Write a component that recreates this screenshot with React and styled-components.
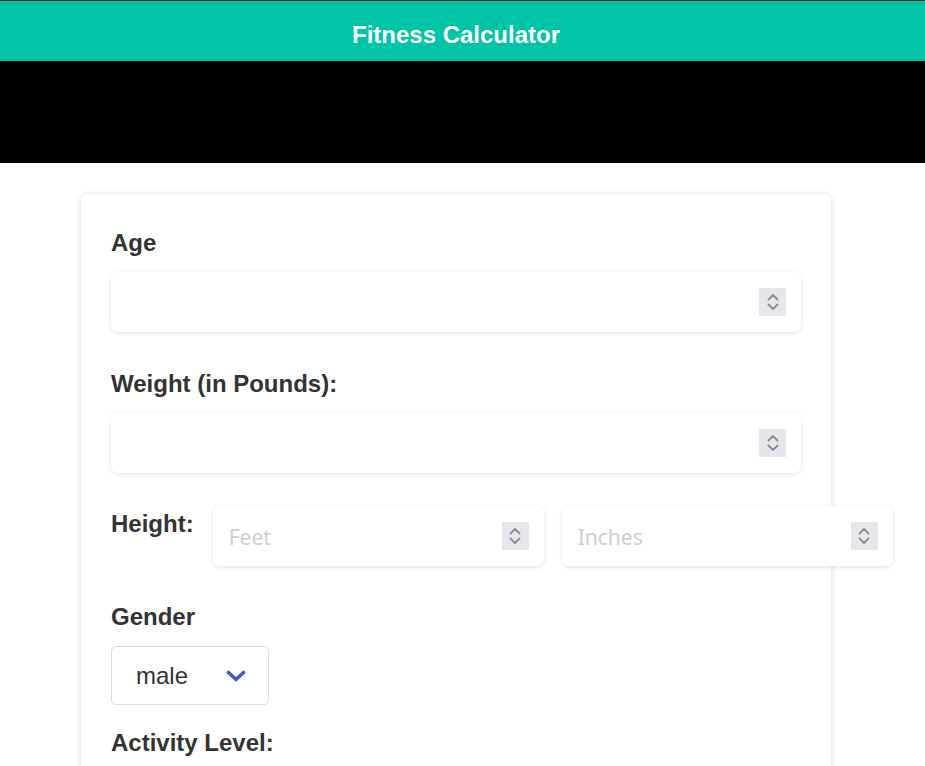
import styled, { createGlobalStyle } from "styled-components";

const GlobalStyle = createGlobalStyle`
  html, body {
    margin: 0;
    padding: 0;
    background: #ffffff;
    overflow: hidden;
  }
  body {
    font-family: "Liberation Sans", Arial, sans-serif;
  }
`;

const Page = styled.div`
  min-height: 100vh;
`;

const Header = styled.header`
  height: 60px;
  border-top: 1px solid #0d2b27;
  background: #00c4a7;
  display: flex;
  align-items: center;
  justify-content: center;
  padding-right: 13px;
`;

const Title = styled.h1`
  margin: 8px 0 0;
  color: #ffffff;
  font-size: 24px;
  font-weight: 700;
  font-family: "Liberation Sans", Arial, sans-serif;
`;

const Banner = styled.div`
  height: 102px;
  background: #000000;
`;

const Main = styled.main`
  padding: 31px 13px 0 0;
`;

const Card = styled.form`
  width: 750px;
  box-sizing: border-box;
  margin: 0 auto;
  padding: 35px 30px 40px;
  background: #ffffff;
  border-radius: 7px;
  box-shadow: 0 1px 6px rgba(0, 0, 0, 0.16);
  display: flex;
  flex-direction: column;
`;

const Field = styled.div`
  display: flex;
  flex-direction: column;
  align-items: flex-start;
  gap: ${(p) => p.$gap || 15}px;
  margin-bottom: ${(p) => p.$after || 38}px;
`;

const Label = styled.label`
  font-size: 24px;
  line-height: 28px;
  font-weight: 700;
  color: #333333;
`;

const InlineRow = styled.div`
  display: flex;
  align-items: flex-start;
  margin-bottom: 37px;
  margin-top: -5px;

  & > label {
    margin-right: 19px;
    padding-top: 4px;
  }
`;

const InputBox = styled.div`
  height: 60px;
  width: ${(p) => (p.$w ? `${p.$w}px` : "100%")};
  flex: none;
  margin-right: ${(p) => p.$mr || 0}px;
  box-sizing: border-box;
  background: #ffffff;
  border-radius: 7px;
  box-shadow: 0 1px 4px rgba(0, 0, 0, 0.12);
  display: flex;
  align-items: center;
  padding: 0 15px 0 14px;
`;

const TextInput = styled.input`
  flex: 1;
  min-width: 0;
  border: none;
  outline: none;
  background: transparent;
  font-family: "Noto Sans", "Open Sans", sans-serif;
  font-size: 21px;
  color: #333333;
  padding: 1px 2px 0;

  &::placeholder {
    color: #cfcfcf;
  }
  &::-webkit-inner-spin-button,
  &::-webkit-outer-spin-button {
    -webkit-appearance: none;
    margin: 0;
  }
`;

const Spinner = styled.span`
  width: 27px;
  height: 28px;
  background: #e6e6ec;
  display: flex;
  align-items: center;
  justify-content: center;
  flex: 0 0 auto;
`;

const SelectBox = styled.div`
  min-width: 158px;
  height: 59px;
  box-sizing: border-box;
  border: 1px solid #dcdcdc;
  border-radius: 5px;
  display: flex;
  align-items: center;
  justify-content: space-between;
  gap: 30px;
  padding: 0 22px 0 24px;
  font-size: 24px;
  color: #333333;
  background: #ffffff;
`;

function SpinIcon() {
  return (
    <Spinner>
      <svg width="14" height="20" viewBox="0 0 14 20" fill="none">
        <polyline
          points="2.5,7.5 7,3 11.5,7.5"
          stroke="#8a8a94"
          strokeWidth="1.8"
          strokeLinecap="round"
          strokeLinejoin="round"
        />
        <polyline
          points="2.5,12.5 7,17 11.5,12.5"
          stroke="#8a8a94"
          strokeWidth="1.8"
          strokeLinecap="round"
          strokeLinejoin="round"
        />
      </svg>
    </Spinner>
  );
}

function NumberField({ placeholder, width, mr }) {
  return (
    <InputBox $w={width} $mr={mr}>
      <TextInput type="number" placeholder={placeholder} />
      <SpinIcon />
    </InputBox>
  );
}

function Select({ value }) {
  return (
    <SelectBox>
      <span>{value}</span>
      <svg width="20" height="12" viewBox="0 0 20 12" fill="none">
        <polyline
          points="2.5,2.5 10,9.5 17.5,2.5"
          stroke="#4656c6"
          strokeWidth="3.6"
          strokeLinecap="round"
          strokeLinejoin="round"
        />
      </svg>
    </SelectBox>
  );
}

export default function App() {
  return (
    <Page>
      <GlobalStyle />
      <Header>
        <Title>Fitness Calculator</Title>
      </Header>
      <Banner />
      <Main>
        <Card onSubmit={(e) => e.preventDefault()}>
          <Field>
            <Label>Age</Label>
            <NumberField />
          </Field>
          <Field>
            <Label>Weight (in Pounds):</Label>
            <NumberField />
          </Field>
          <InlineRow>
            <Label>Height:</Label>
            <NumberField placeholder="Feet" width={331} mr={18} />
            <NumberField placeholder="Inches" width={331} />
          </InlineRow>
          <Field $gap={15} $after={24}>
            <Label>Gender</Label>
            <Select value="male" />
          </Field>
          <Field>
            <Label>Activity Level:</Label>
          </Field>
        </Card>
      </Main>
    </Page>
  );
}
